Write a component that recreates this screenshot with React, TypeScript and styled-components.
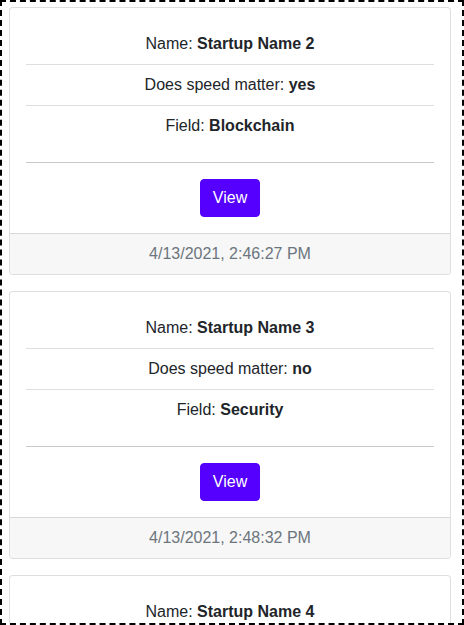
import React from "react";
import styled, { createGlobalStyle } from "styled-components";

const GlobalStyle = createGlobalStyle`
  html, body { margin: 0; padding: 0; background: #fff; }
  body {
    font-family: "Liberation Sans", Arial, Helvetica, sans-serif;
    font-size: 16px;
    line-height: 1.5;
    color: #212529;
  }
  * { box-sizing: border-box; }
`;

const Frame = styled.div`
  width: 464px;
  height: 625px;
  border: 2px dashed #000;
  overflow: hidden;
  padding: 5px 11px 0 7px;
`;

const Card = styled.div`
  display: flex;
  flex-direction: column;
  background: #fff;
  border: 1px solid rgba(0, 0, 0, 0.125);
  border-radius: 4px;
  margin-bottom: 16px;
  overflow: hidden;
`;

const CardBody = styled.div`
  padding: 16px;
  display: flex;
  flex-direction: column;
  align-items: stretch;
  text-align: center;
`;

const List = styled.ul`
  list-style: none;
  margin: 0;
  padding: 0;
`;

const Item = styled.li`
  padding: 8px 0;
  border-bottom: 1px solid rgba(0, 0, 0, 0.125);
  &:last-child { border-bottom: none; }
`;

const Divider = styled.hr`
  margin: 16px 0;
  border: 0;
  border-top: 1px solid #c8c9cb;
  height: 0;
`;

const ViewButton = styled.button`
  align-self: center;
  font-family: inherit;
  font-size: 16px;
  line-height: 24px;
  color: #fff;
  background: #5500ff;
  border: 1px solid #5500ff;
  border-radius: 4px;
  padding: 6px 12px;
  cursor: pointer;
`;

const Footer = styled.div`
  background: #f7f7f7;
  border-top: 1px solid rgba(0, 0, 0, 0.125);
  padding: 8px 16px;
  text-align: center;
  color: #6c757d;
`;

type Startup = { name: string; speed: string; field: string; date: string };

const startups: Startup[] = [
  { name: "Startup Name 2", speed: "yes", field: "Blockchain", date: "4/13/2021, 2:46:27 PM" },
  { name: "Startup Name 3", speed: "no", field: "Security", date: "4/13/2021, 2:48:32 PM" },
  { name: "Startup Name 4", speed: "yes", field: "AI", date: "4/13/2021, 2:50:11 PM" },
];

export default function App() {
  return (
    <>
      <GlobalStyle />
      <Frame>
        {startups.map((s) => (
          <Card key={s.name}>
            <CardBody>
              <List>
                <Item>
                  Name: <b>{s.name}</b>
                </Item>
                <Item>
                  Does speed matter: <b>{s.speed}</b>
                </Item>
                <Item>
                  Field: <b>{s.field}</b>
                </Item>
              </List>
              <Divider />
              <ViewButton>View</ViewButton>
            </CardBody>
            <Footer>{s.date}</Footer>
          </Card>
        ))}
      </Frame>
    </>
  );
}
